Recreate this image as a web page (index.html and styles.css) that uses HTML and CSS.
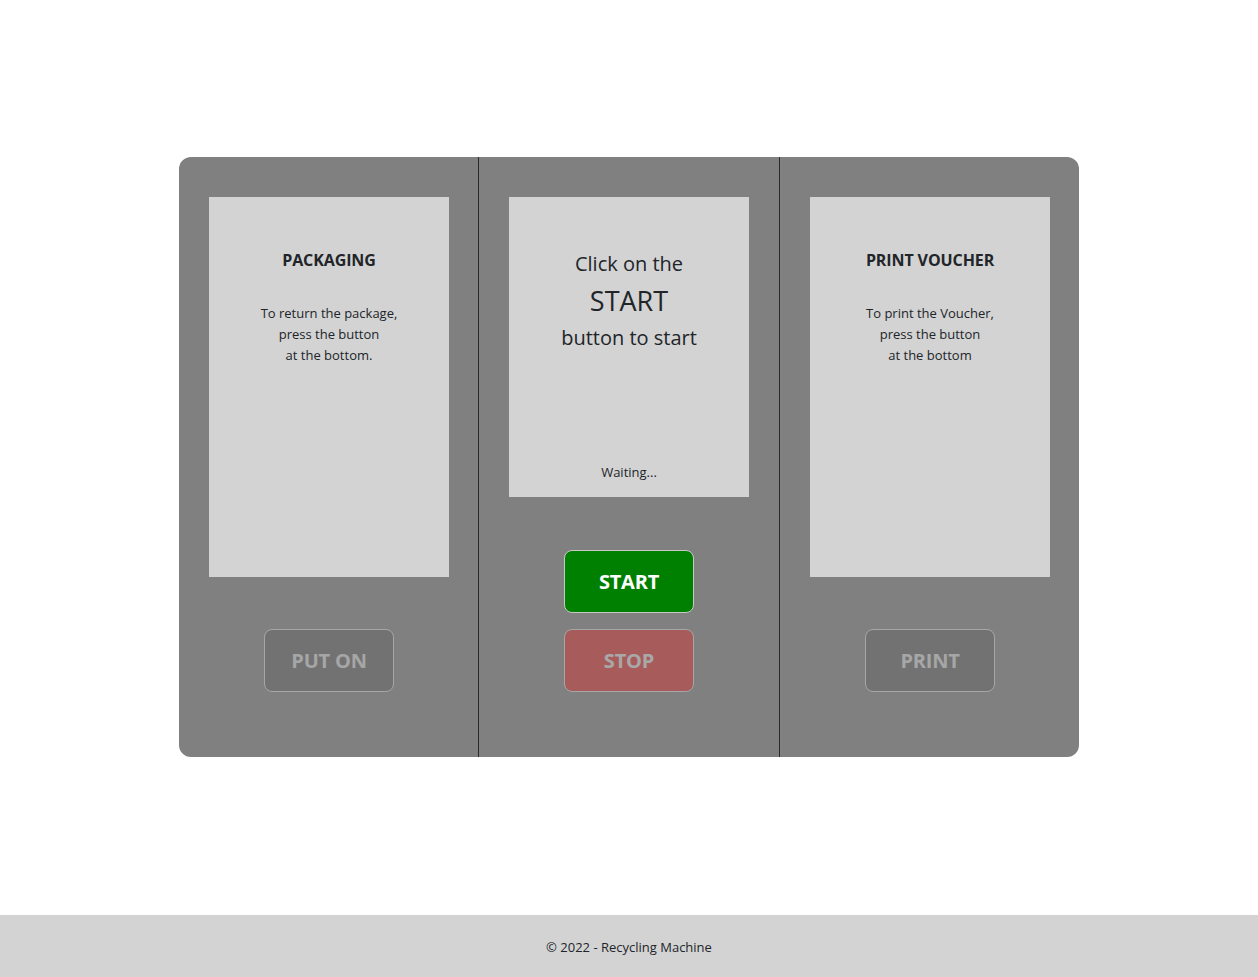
FILE: index.html
```html
<!DOCTYPE html>
<html lang="en">
<head>
<meta charset="utf-8">
<title>Recycling Machine</title>
<link rel="stylesheet" href="styles.css">
</head>
<body>
<div class="page">
  <main class="main">
    <div class="machine">
      <section class="col">
        <div class="stack">
          <div class="panel panel-tall">
            <h2 class="panel-title">PACKAGING</h2>
            <p class="panel-text">To return the package,<br>press the button<br>at the bottom.</p>
          </div>
          <div class="btns btns-side">
            <button class="btn btn-gray" disabled>PUT ON</button>
          </div>
        </div>
      </section>
      <section class="col col-mid">
        <div class="stack">
          <div class="panel panel-short">
            <div class="prompt">
              <div class="prompt-sm">Click on the</div>
              <div class="prompt-lg">START</div>
              <div class="prompt-sm">button to start</div>
            </div>
            <div class="status">Waiting...</div>
          </div>
          <div class="btns btns-mid">
            <button class="btn btn-green">START</button>
            <button class="btn btn-red" disabled>STOP</button>
          </div>
        </div>
      </section>
      <section class="col">
        <div class="stack">
          <div class="panel panel-tall">
            <h2 class="panel-title">PRINT VOUCHER</h2>
            <p class="panel-text">To print the Voucher,<br>press the button<br>at the bottom</p>
          </div>
          <div class="btns btns-side">
            <button class="btn btn-gray" disabled>PRINT</button>
          </div>
        </div>
      </section>
    </div>
  </main>
  <footer class="footer">© 2022 - Recycling Machine</footer>
</div>
</body>
</html>
```
FILE: styles.css
```css
* { box-sizing: border-box; }
html, body { margin: 0; padding: 0; }
body {
  font-family: "Open Sans", "Noto Sans", sans-serif;
  color: #212529;
  background: #fff;
}
.page {
  min-height: 100vh;
  display: flex;
  flex-direction: column;
}
.main {
  flex: 1;
  padding-top: 157px;
}
.machine {
  width: 900px;
  height: 600px;
  margin: 0 auto;
  background: #808080;
  border-radius: 12px;
  display: grid;
  grid-template-columns: 299px 302px 299px;
}
.col {
  padding: 40px 0 0 30px;
}
.col-mid {
  border-left: 1px solid #2a2a2a;
  border-right: 1px solid #2a2a2a;
}
.stack {
  width: 240px;
  display: flex;
  flex-direction: column;
  align-items: center;
}
.panel {
  width: 240px;
  background: #d3d3d3;
  text-align: center;
}
.panel-tall { height: 380px; padding-top: 51px; }
.panel-short {
  height: 300px;
  display: flex;
  flex-direction: column;
  padding-top: 53px;
  padding-bottom: 15px;
}
.panel-title {
  margin: 0;
  font-size: 16px;
  font-weight: 700;
  line-height: 24px;
  letter-spacing: -0.1px;
}
.panel-text {
  margin: 31px 0 0;
  font-size: 13px;
  line-height: 21px;
}
.prompt-sm { font-size: 20px; line-height: 27px; }
.prompt-lg { font-size: 27px; line-height: 47px; }
.status {
  margin-top: auto;
  font-size: 13px;
  line-height: 20px;
}
.btns {
  display: flex;
  flex-direction: column;
  align-items: center;
  gap: 16px;
}
.btns-side { margin-top: 52px; }
.btns-mid { margin-top: 53px; }
.btn {
  width: 130px;
  height: 63px;
  border-radius: 8px;
  border: 1px solid #cccccc;
  font-family: inherit;
  font-size: 20px;
  font-weight: 700;
  letter-spacing: -0.2px;
  padding: 0;
}
.btn:disabled { opacity: 0.5; }
.btn-green { background: #008000; color: #fff; border-color: #c8c8c8; }
.btn-gray { background: #666666; color: #cccccc; }
.btn-red { background: #d03838; color: #d0d0d0; }
.footer {
  height: 62px;
  padding-top: 1px;
  background: #d3d3d3;
  display: flex;
  align-items: center;
  justify-content: center;
  font-size: 13px;
}
```
